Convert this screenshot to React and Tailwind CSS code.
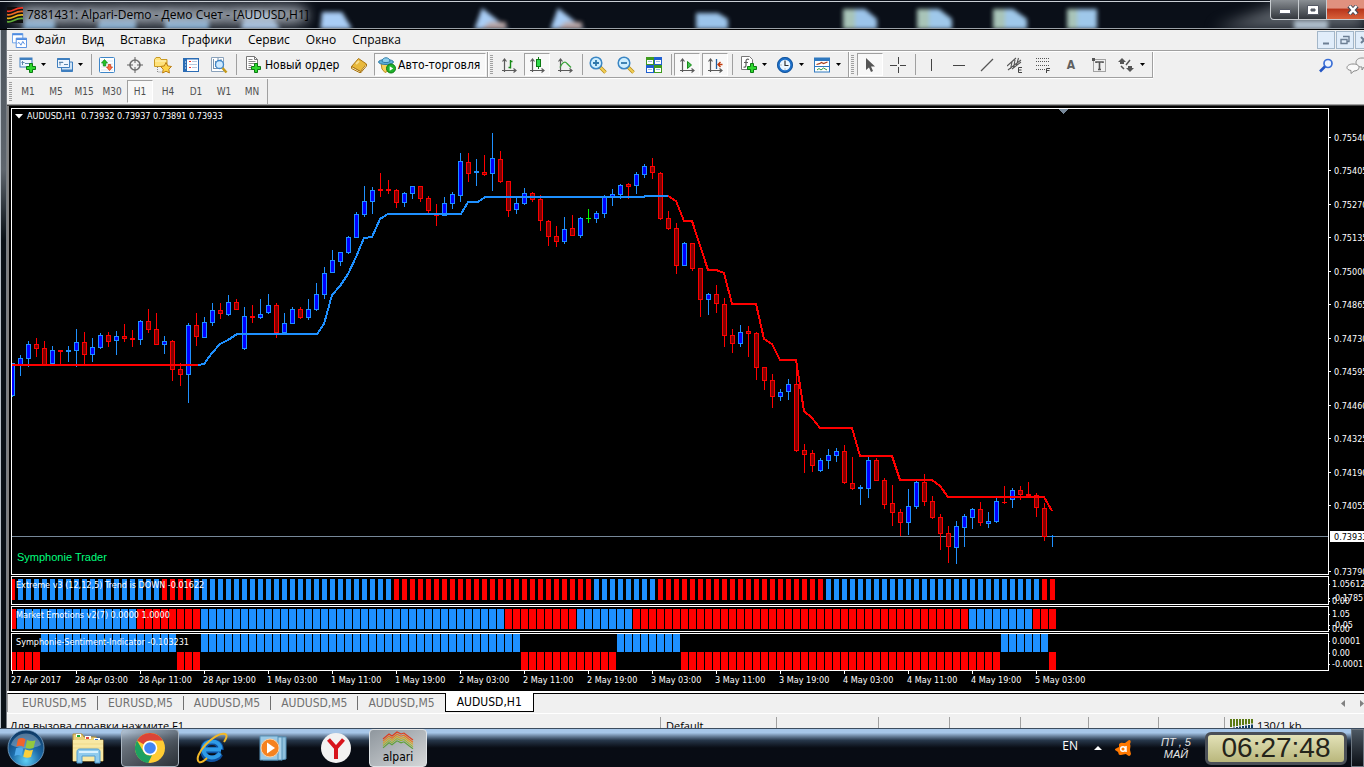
import React from 'react';
import clsx from 'clsx';

// kind, high, body top, body bottom, low
const candles = `
b 363 363 396 397|b 355 358 366 376|b 341 344 359 367|r 338 344 349 357|r 341 348 365 365|b 346 350 364 364|r 350 350 352 365|b 346 350 352 362
b 329 342 351 367|r 332 342 355 364|b 338 347 355 362|b 333 335 348 349|r 332 335 342 347|b 331 336 341 355|r 324 336 339 342|r 330 338 340 347
b 320 321 340 345|r 309 321 330 333|r 313 329 345 345|b 336 341 345 354|r 340 341 370 381|r 363 369 375 386|b 323 325 375 403|r 313 325 337 346
b 317 322 338 338|b 303 310 323 326|r 303 310 314 319|b 295 302 315 316|r 299 302 310 310|b 307 316 349 350|r 305 316 318 323|b 299 314 318 319
b 294 305 313 314|r 303 305 333 338|b 313 323 333 333|b 307 309 324 324|r 307 309 318 319|b 299 309 318 320|b 283 294 310 311|b 267 273 295 299
b 250 260 273 273|b 252 252 262 266|b 236 237 253 254|b 212 214 238 238|b 186 201 215 217|b 187 190 202 214|r 173 189 191 197|r 180 189 191 194
r 189 190 203 208|b 192 193 203 207|b 186 186 194 199|r 186 186 199 202|r 196 198 211 213|r 204 214 216 226|b 197 203 216 216|b 192 194 204 209
b 153 161 196 202|r 153 162 174 182|b 159 171 173 186|r 155 172 175 176|b 133 158 174 191|r 151 159 182 183|r 181 181 211 217|b 197 203 210 214
b 188 193 204 205|r 192 193 200 202|r 195 199 221 231|r 220 221 237 246|r 226 236 242 247|b 217 229 242 244|r 215 228 236 236|b 217 218 236 238
g 209 218 219 223|b 211 213 219 223|b 195 197 214 218|b 189 194 197 206|b 184 185 195 199|r 183 184 187 199|b 172 174 186 194|b 164 166 175 178
r 158 166 173 179|r 172 173 219 220|r 211 218 229 230|r 223 228 266 274|b 242 243 266 266|r 243 243 269 271|r 268 268 300 317|b 293 294 300 315
r 285 294 304 313|r 298 304 336 347|r 329 335 344 353|b 325 332 344 347|r 326 331 334 357|r 332 333 368 380|r 367 367 381 390|r 374 380 397 408
b 389 392 397 401|b 379 384 392 400|r 359 384 451 452|r 444 450 455 473|r 450 453 466 472|b 458 460 471 472|b 449 455 461 469|b 448 451 456 462
r 445 451 483 484|r 457 483 489 490|b 485 487 489 505|b 457 460 489 498|r 458 460 481 481|r 478 480 505 509|r 485 503 513 526|r 509 512 523 536
b 489 506 523 535|b 481 482 507 509|r 474 482 502 506|r 496 501 518 519|r 514 517 534 550|r 526 533 547 563|b 521 526 548 564|b 514 516 528 547
b 508 509 518 529|r 502 509 523 526|b 512 521 524 528|b 498 501 522 523|r 486 502 503 504|b 488 490 500 508|r 486 490 495 500|r 482 494 496 496
r 493 495 508 517|r 503 508 537 541|b 535 536 537 547`
  .trim()
  .split(/[|\n]/)
  .map((row) => {
    const [kind, ...values] = row.split(' ');
    return [kind, ...values.map(Number)];
  });

const candleColors = {
  b: ['#1e90ff', '#0000ff'],
  r: ['#ff0000', '#800000'],
  g: ['#00ff00', '#00ff00'],
};

const trendLines = [
  ['#ff0000', '12,365 198,365'],
  ['#1e90ff', '198,365 204,364 212,353 220,344 228,340 237,334 317,334 324,324 332,295 340,286 348,274 356,257 364,238 372,237 380,219 388,214 461,214 468,202 478,202 485,197 644,197 645,196 668,196'],
  ['#ff0000', '668,196 676,201 684,221 692,221 708,270 716,270 724,273 732,304 756,304 764,339 772,344 780,360 796,360 804,411 812,418 820,428 852,428 860,456 892,456 900,480 932,480 940,486 948,497 1044,497 1052,511'],
];

// last bar index of every colour run
const extremeRuns = [['r', 0], ['b', 18], ['r', 22], ['b', 47], ['r', 72], ['b', 80], ['r', 101], ['b', 128], ['r', 130]];
const emotionRuns = [['r', 0], ['b', 15], ['r', 23], ['b', 61], ['r', 70], ['b', 77], ['r', 119], ['b', 127], ['r', 130]];
const sentimentRuns = [['r', 3], ['b', 20], ['r', 23], ['b', 63], ['r', 75], ['b', 83], ['r', 123], ['b', 129], ['r', 130]];

const prices = [
  [137, '0.75540'], [170, '0.75405'], [204, '0.75270'], [237, '0.75135'], [271, '0.75000'],
  [304, '0.74865'], [338, '0.74730'], [371, '0.74595'], [405, '0.74460'], [438, '0.74325'],
  [472, '0.74190'], [505, '0.74055'], [571, '0.73790'],
];

const times = [
  '27 Apr 2017', '28 Apr 03:00', '28 Apr 11:00', '28 Apr 19:00', '1 May 03:00', '1 May 11:00',
  '1 May 19:00', '2 May 03:00', '2 May 11:00', '2 May 19:00', '3 May 03:00', '3 May 11:00',
  '3 May 19:00', '4 May 03:00', '4 May 11:00', '4 May 19:00', '5 May 03:00',
];

const tahoma = "font-['DejaVu_Sans_Condensed','DejaVu_Sans',sans-serif]";
const segoe = "font-['Open_Sans','Noto_Sans',sans-serif]";

const expandRuns = (runs) => {
  const out = [];
  runs.forEach(([kind, last]) => {
    while (out.length <= last) out.push(kind);
  });
  return out;
};

/* ---------- icons ---------- */

const Icon = ({ children, size = 16, box = 16 }) => (
  <svg width={size} height={size} viewBox={`0 0 ${box} ${box}`} fill="none" className="shrink-0" aria-hidden="true">
    {children}
  </svg>
);

const Plus = ({ x, y }) => (
  <path
    transform={`translate(${x} ${y})`}
    d="M3.5.5h3v3h3v3h-3v3h-3v-3h-3v-3h3z"
    fill="#2fd82f"
    stroke="#0b7a12"
  />
);

const NewChartIcon = () => (
  <Icon size={18} box={18}>
    <rect x="1" y="2" width="12" height="9" fill="#eef6ff" stroke="#3f7fbf" />
    <path d="M1 3h12" stroke="#3f7fbf" strokeWidth="2" />
    <path d="M3.500 5v4M2.500 6.500h3M6 7.500h5" stroke="#5c86ad" />
    <Plus x={7} y={7} />
  </Icon>
);

const ProfilesIcon = () => (
  <Icon size={18} box={18}>
    <path d="M5.500 6h11v9.500h-11z" fill="#cfe3f5" stroke="#3f7fbf" />
    <path d="M1.500 2.500h12v9h-12z" fill="#eef6ff" stroke="#3f7fbf" />
    <path d="M1.500 3h12" stroke="#3f7fbf" strokeWidth="2" />
    <path d="M4 5.500v4M3 6.500h4l-1-1M8 8.500h4" stroke="#5c86ad" />
    <path d="M5.500 14.500h11" stroke="#3f7fbf" strokeWidth="2" />
  </Icon>
);

const MarketWatchIcon = () => (
  <Icon>
    <rect x=".5" y=".5" width="15" height="15" rx="1" fill="#fff" stroke="#3f86c8" />
    <path d="M2 4h12M2 7h12M2 10h12M2 13h12" stroke="#dbe6f2" />
    <path d="M5.500 2.500 8.500 6H6.700v3H4.300V6H2.500z" fill="#25c225" stroke="#0a8a12" strokeWidth=".7" />
    <path d="M10.500 13.500 7.500 10h1.800V7.500h2.400V10h1.800z" fill="#ff7043" stroke="#c83208" strokeWidth=".7" />
  </Icon>
);

const CrosshairTargetIcon = () => (
  <Icon>
    <circle cx="8" cy="8" r="5" stroke="#707070" strokeWidth="1.600" />
    <path d="M8 0v6M8 10v6M0 8h6M10 8h6" stroke="#606060" />
  </Icon>
);

const NavigatorIcon = () => (
  <Icon size={18} box={18}>
    <path d="M.5 3.500 2 1.500h4l1 2h6v7H.5z" fill="#ffe27a" stroke="#c99a24" />
    <path d="M1 5h11" stroke="#fff4c0" />
    <path d="M3.500 11v5h5" stroke="#888" strokeDasharray="1 1" />
    <path d="m12 6.500 1.700 3.400 3.800.6-2.700 2.700.6 3.800-3.400-1.800L8.600 17l.6-3.800-2.700-2.700 3.800-.6z" fill="#ffd54a" stroke="#bd7f13" />
  </Icon>
);

const DataWindowIcon = () => (
  <Icon>
    <rect x=".5" y="1.500" width="15" height="13" fill="#fff" stroke="#2b6cb5" />
    <path d="M1 2h14" stroke="#2b6cb5" />
    <path d="M2.500 2v12" stroke="#2b6cb5" strokeWidth="3" />
    <path d="M6 4.500h2M6 10.500h2" stroke="#e33" />
    <path d="M9 4.500h5M6 7.500h8M9 10.500h5" stroke="#b6c9de" />
    <path d="M2 5h1M2 8h1M2 11h1" stroke="#fff" />
  </Icon>
);

const TesterIcon = () => (
  <Icon size={18} box={18}>
    <path d="M1.500 1.500h12v14h-12z" fill="#fff" stroke="#8aa2bb" />
    <path d="M3.500 3v10M5.500 5v6M3 12.500h9M8 2v3M11 3v3" stroke="#7893ae" />
    <circle cx="9.500" cy="8.500" r="4" fill="#cfeaff" stroke="#3f86c8" strokeWidth="1.300" />
    <path d="m12.500 12 4 4.500" stroke="#c49a1a" strokeWidth="2.500" />
  </Icon>
);

const NewOrderIcon = () => (
  <Icon size={18} box={18}>
    <path d="M1.500.5h8l3 3v10h-11z" fill="#fff" stroke="#777" />
    <path d="M9.500.5v3h3" stroke="#777" />
    <path d="M3.500 3.500h4M3.500 5.500h7M3.500 7.500h7M3.500 9.500h3M3.500 11.500h3" stroke="#888" />
    <Plus x={6} y={7} />
  </Icon>
);

const BookIcon = () => (
  <Icon>
    <path d="m.5 9.500 7-8 8 5.500-6 7.500z" fill="#e8b93c" stroke="#a87412" />
    <path d="M.5 9.500v2l9 4.500v-1.500zM9.500 16l6-7V7" fill="#fff3c4" stroke="#a87412" />
    <path d="m5 7 3-3" stroke="#f8df8e" strokeWidth="2" />
  </Icon>
);

const AutoTradeIcon = () => (
  <Icon size={18} box={18}>
    <path d="M3 7h10l-1 7-5 2.500L4 13z" fill="#f7d25a" stroke="#b98a1c" />
    <ellipse cx="8" cy="6" rx="7.500" ry="2.500" fill="#5fb0d8" stroke="#2f7ba6" />
    <path d="M4 5.500c0-5 8-5 8 0-2 1.500-6 1.500-8 0z" fill="#8fd0ee" stroke="#2f7ba6" />
    <circle cx="13" cy="12.500" r="4.500" fill="#1fb32c" stroke="#0b7a12" />
    <path d="m11.700 10.200 3.500 2.300-3.500 2.300z" fill="#fff" />
  </Icon>
);

const Axes = () => (
  <path d="M3.500 15V2M1.500 4.500l2-2.500 2 2.500M1 13.500h14M12.500 11.500l2.500 2-2.500 2" stroke="#5a5a5a" strokeWidth="1.200" />
);

const BarChartIcon = () => (
  <Icon>
    <Axes />
    <path d="M9.500 3v8.500M7.500 10.500h2M9.500 4.500h2" stroke="#178a17" strokeWidth="1.400" />
  </Icon>
);

const CandleChartIcon = () => (
  <Icon>
    <Axes />
    <path d="M9.500 0v12" stroke="#0b7a12" />
    <rect x="7.500" y="2.500" width="4" height="7" fill="#2fd84a" stroke="#0b7a12" />
  </Icon>
);

const LineChartIcon = () => (
  <Icon>
    <Axes />
    <path d="M3 10.500c2-5 5-7 7-4l4 4" stroke="#3aa33a" strokeWidth="1.300" />
  </Icon>
);

const MagnifierIcon = ({ plus }) => (
  <Icon size={18} box={18}>
    <path d="m11 11 5.500 5.500" stroke="#b88d18" strokeWidth="3.600" />
    <path d="m11 11 5.500 5.500" stroke="#f2cf58" strokeWidth="2" />
    <circle cx="7" cy="7" r="5.800" fill="#cdeeff" stroke="#3a86c4" strokeWidth="1.500" />
    <path d={plus ? 'M4 7h6M7 4v6' : 'M4 7h6'} stroke="#2f78ac" strokeWidth="1.800" />
  </Icon>
);

const TileIcon = () => (
  <Icon>
    <path d="M0 0h8v8H0zM8 8h8v8H8z" fill="#3f9b1e" />
    <path d="M8 0h8v8H8zM0 8h8v8H0z" fill="#1f5fd0" />
    <path d="M1 3h6v4H1zM9 3h6v4H9zM1 11h6v4H1zM9 11h6v4H9z" fill="#fff" />
    <path d="M2 4.500h4M10 4.500h4M2 12.500h4M10 12.500h4" stroke="#9fbfe0" />
  </Icon>
);

const AutoScrollIcon = () => (
  <Icon>
    <Axes />
    <path d="m8.500 4.500 4 3.500-4 3.500z" fill="#3fc34f" stroke="#178a17" />
  </Icon>
);

const ShiftIcon = () => (
  <Icon>
    <Axes />
    <path d="M9.500 2v10" stroke="#1f5fa0" strokeWidth="1.300" />
    <path d="M15.500 7.500h-4M13.500 5l-2.500 2.500 2.500 2.500" stroke="#c23a0a" strokeWidth="1.400" />
  </Icon>
);

const IndicatorsIcon = () => (
  <Icon size={18} box={18}>
    <path d="M1.500.5h8l3 3v10h-11z" fill="#fff" stroke="#777" />
    <path d="M9 3.500c-2-1-3 0-3 2v3.500c0 2-1 2.500-2.500 2M4 6.500h4" stroke="#5c5c5c" strokeWidth="1.200" />
    <Plus x={7} y={7} />
  </Icon>
);

const ClockIcon = () => (
  <Icon>
    <circle cx="8" cy="8" r="6.600" fill="#eaf6ff" stroke="#1d6fc8" strokeWidth="2.600" />
    <circle cx="8" cy="8" r="7.600" stroke="#0b4688" strokeWidth=".7" />
    <path d="M8 3.500V8.500h3.500" stroke="#333" strokeWidth="1.200" />
    <path d="M3.500 8h1M8 12.500v-1" stroke="#888" />
  </Icon>
);

const TemplateIcon = () => (
  <Icon>
    <rect x=".5" y="1" width="15" height="14" fill="#fff" stroke="#2f78bf" />
    <path d="M0 2.500h16" stroke="#2f78bf" strokeWidth="3" />
    <path d="M1 9.500h14" stroke="#2f78bf" />
    <path d="m2.500 7.500 3-.8 2-1.200 2 1 4-1.500" stroke="#a8401c" strokeWidth="1.200" />
    <path d="m3 13 2-1.500 2 1.500 2.500-2L13 13" stroke="#2f9a3a" />
  </Icon>
);

const CursorIcon = () => (
  <Icon>
    <path d="M4 1v12l3-2.500 2 4.500 2-1-2-4.500h4z" fill="#555" />
  </Icon>
);

const CrossIcon = () => (
  <Icon>
    <path d="M8.500 0v7M8.500 10v6M0 8.500h7M10 8.500h6" stroke="#444" />
  </Icon>
);

const VLineIcon = () => <Icon><path d="M8.500 2v12" stroke="#444" /></Icon>;
const HLineIcon = () => <Icon><path d="M2 8.500h12" stroke="#444" /></Icon>;
const TrendIcon = () => <Icon><path d="m2 14 12-12" stroke="#555" strokeWidth="1.200" /></Icon>;

const ChannelIcon = () => (
  <Icon>
    <path d="M0 9 9 1M1 13 14 3M5 12l9-7M3.500 12 5 5M6.500 11l1.500-8M9.500 8l2-7" stroke="#555" strokeWidth="1.100" />
    <path d="M15 10.500h-3.500v5H15M11.500 13h3" stroke="#444" />
  </Icon>
);

const FiboIcon = () => (
  <Icon>
    <path d="M1 1.500h14M1 4.500h14M1 8.500h14M1 12.500h9" stroke="#555" strokeDasharray="1 1" />
    <path d="M15 11.500h-3.500V16M11.500 13.500h3" stroke="#444" />
  </Icon>
);

const LabelIcon = () => (
  <Icon>
    <rect x="2.500" y="2.500" width="12" height="12" stroke="#555" strokeDasharray="1 1" />
    <path d="M1 1h3v3H1z" fill="#555" />
    <path d="M5 6V5h7v1M8.500 5v7.500M7 12.500h3" stroke="#555" strokeWidth="1.600" />
  </Icon>
);

const ShapesIcon = () => (
  <Icon>
    <path d="m4 1 4 4H6v2H2V5H0zM12 15l-4-4h2V9h4v2h2z" fill="#555" />
    <path d="m3 9 3 3M8 8l4-5" stroke="#555" strokeWidth="1.500" />
  </Icon>
);

const SearchIcon = () => (
  <Icon>
    <circle cx="10" cy="5.500" r="4" fill="#eef5ff" stroke="#3b6fd6" strokeWidth="1.700" />
    <path d="m7 8.500-5 5" stroke="#2456c4" strokeWidth="2.600" />
  </Icon>
);

const ChatIcon = () => (
  <Icon size={24} box={24}>
    <path d="M16 4c5 0 7 2 7 4.500s-2 4.500-5 4.500l-2 3v-3c-4 0-6-2-6-4.500S12 4 16 4z" fill="#f2f2f2" stroke="#8a8a8a" />
    <path d="M7 10c4 0 6 1.500 6 3.500s-2 3.500-5 3.500l-3 2.500v-3c-3-.5-4-1.500-4-3S3 10 7 10z" fill="#fafafa" stroke="#8a8a8a" />
  </Icon>
);

/* ---------- window chrome ---------- */

const TitleBar = () => (
  <header className={clsx('relative flex h-[30px] shrink-0 overflow-hidden border-b border-black bg-[#0a0f18]', segoe)}>
    {/* desktop shortcuts shining through the glass */}
    <svg className="absolute inset-0 h-full w-full blur-[2px]" aria-hidden="true">
      <path d="M482 8l28 22h-36zM558 8l28 22h-36z" fill="#a9cdf5" />
      <path d="M490 22h16v8h-26zM566 22h16v8h-26z" fill="#b9a7a8" />
      <path d="M245 12h25l12 20h-42zM322 12h20l12 20h-34z" fill="#a9cdf5" />
      <path d="M100 18h36v14h-40zM25 18h30v14H22zM165 18h44v14h-44z" fill="#7fb2de" />
      <path d="M696 13h22l10 6v13h-32zM843 9h22l12 10v13h-34z" fill="#9cc4ea" />
      <path d="M917 9h22l13 10v13h-35zM993 9h20l14 10v13h-34zM1067 9h30v23h-30z" fill="#9fc8ea" />
      <path d="M843 9h12v23h-12zM917 9h12v23h-12zM993 9h12v23h-12zM1067 9h10v23h-10z" fill="#a8c4b8" />
      <path d="M1294 20h34v12h-34z" fill="#c6dcee" />
    </svg>
    <svg className="absolute inset-0 h-full w-full blur-[7px]" aria-hidden="true">
      <path d="M1200 34 1290 0h300v34z" fill="#8e949b" opacity=".6" />
      <rect x="14" y="6" width="292" height="18" rx="9" fill="#a3abb5" opacity=".9" />
    </svg>
    <svg className="absolute inset-0 h-full w-full" shapeRendering="crispEdges" aria-hidden="true">
      <rect y="1" width="100%" height="1" fill="#c9ced4" />
      <rect x="7" y="28" width="100%" height="1" fill="#9aa0a6" />
    </svg>
    <div className="relative flex flex-1 items-center gap-1 pl-[7px]">
      <svg width="16" height="16" viewBox="0 0 16 16" aria-hidden="true">
        <path d="M0 0h16v16H0z" fill="#101010" />
        <path d="M0 4c5 2 8-4 16-3" stroke="#ee3524" strokeWidth="1.800" fill="none" />
        <path d="M0 7.500c5 2 8-4 16-3" stroke="#ee6a24" strokeWidth="1.800" fill="none" />
        <path d="M0 11c5 2 8-4 16-3" stroke="#e8b41b" strokeWidth="1.800" fill="none" />
        <path d="M0 14.500c5 2 8-4 16-3" stroke="#5fae3a" strokeWidth="1.800" fill="none" />
      </svg>
      <h1 className="text-[12px] leading-4 whitespace-nowrap text-black [text-shadow:0_0_8px_#cdd3da]">7881431: Alpari-Demo - Демо Счет - [AUDUSD,H1]</h1>
    </div>
    <div className="relative -mr-4 flex h-[20px] overflow-hidden rounded-b border border-t-0 border-[#c8ccd0] bg-linear-to-b from-[#8a8f94] to-[#34383e]">
      <button type="button" aria-label="Свернуть" className="flex w-7 items-end justify-center border-r border-[#c8ccd0] pb-[5px]">
        <svg width="12" height="5"><path d="M.5.5h11v4H.5z" fill="#fff" stroke="#555a66" /></svg>
      </button>
      <button type="button" aria-label="Развернуть" className="flex w-7 items-center justify-center border-r border-[#c8ccd0]">
        <svg width="12" height="10"><path d="M.5.5h11v9H.5zM4 4h4v2H4z" fill="#fff" fillRule="evenodd" stroke="#555a66" /></svg>
      </button>
      <button type="button" aria-label="Закрыть" className="flex w-[52px] items-center justify-center bg-linear-to-b from-[#e0917f] from-40% via-[#b9361c] via-50% to-[#d8603a]">
        <svg width="12" height="10"><path d="m2 1 8 8M10 1 2 9" stroke="#444a58" strokeWidth="4.500" /><path d="m2.500 1 7 8M9.500 1l-7 8" stroke="#fff" strokeWidth="2.500" /></svg>
      </button>
    </div>
  </header>
);

const menuItems = ['Файл', 'Вид', 'Вставка', 'Графики', 'Сервис', 'Окно', 'Справка'];

const MenuBar = () => (
  <nav className={clsx('flex h-[22px] shrink-0 items-center border-b border-white bg-[#f0f0f0] pl-[5px] shadow-[inset_0_-1px_0_#a0a0a0]', segoe)}>
    <Icon size={15}>
      <path d="M.5.500h11v10H.5z" fill="#fff" stroke="#6aa0e6" />
      <path d="M4.500 5.500h11v10h-11z" fill="#fff" stroke="#4f8be0" />
      <path d="M4.500 6.500h11M.5 1.500h11" stroke="#4f8be0" strokeWidth="2" />
      <path d="m6 11 1.500-1 2 3 2-4 2 3" stroke="#4f8be0" />
    </Icon>
    <div className="ml-2 flex flex-1 gap-4">
      {menuItems.map((item) => (
        <button type="button" key={item} className="pb-0.5 text-[12px] leading-[18px] text-black">{item}</button>
      ))}
    </div>
    <div className="-mr-[9px] flex gap-px pb-0.5 text-[#6d7f94]">
      {['M5 11.500h6', 'M6 4.500h6v5h-2M4 7.500h6v4H4z', 'm5 5 6 6M11 5l-6 6'].map((d, i) => (
        <button type="button" key={d} aria-label={['Свернуть окно', 'Восстановить окно', 'Закрыть окно'][i]} className="flex size-[18px] items-center justify-center border border-[#a3b6c8] bg-[#e1edfa]">
          <Icon><path d={d} stroke="currentColor" strokeWidth={i === 1 ? 1.4 : 2} /></Icon>
        </button>
      ))}
    </div>
  </nav>
);

const pressedLook = 'border border-t-[#a0a0a0] border-l-[#a0a0a0] border-r-white border-b-white bg-[#f8f8f8]';

const Grip = () => (
  <span className="mr-[3px] h-[19px] w-[3px] shrink-0 bg-[repeating-linear-gradient(to_bottom,#a0a0a0_0_1px,#f0f0f0_1px_2px)]" />
);

const Sep = () => <span className="mx-0.5 h-[21px] w-px shrink-0 bg-[#a0a0a0]" />;

const Tool = ({ label, pressed, children }) => (
  <button type="button" aria-label={label} className={clsx('mr-0.5 flex h-[23px] w-[26px] shrink-0 items-center justify-center', pressed && pressedLook)}>
    {children}
  </button>
);

const Caret = () => (
  <svg width="5" height="3" aria-hidden="true"><path d="M0 0h5L2.500 3z" fill="#000" /></svg>
);

const DropTool = ({ label, children }) => (
  <button type="button" aria-label={label} className="flex h-[23px] w-[37px] shrink-0 items-center justify-between pr-[6px] pl-1">
    {children}
    <Caret />
  </button>
);

const ToolSection = ({ children }) => (
  <div className="flex h-full shrink-0 items-center border-r border-[#a0a0a0] pr-px pl-0.5 shadow-[1px_0_0_#fff]">{children}</div>
);

const Toolbar = () => (
  <div className={clsx('flex h-[27px] shrink-0 items-center justify-between bg-[#f0f0f0] text-[12px] text-black', tahoma)}>
    <div className="flex h-[26px] self-start border-b border-[#a0a0a0] shadow-[0_1px_0_#fff]">
      <ToolSection>
        <Grip />
        <DropTool label="Новый график"><NewChartIcon /></DropTool>
        <DropTool label="Профили"><ProfilesIcon /></DropTool>
        <Sep />
        <Tool label="Обзор рынка"><MarketWatchIcon /></Tool>
        <Tool label="Прицел"><CrosshairTargetIcon /></Tool>
        <Tool label="Навигатор"><NavigatorIcon /></Tool>
        <Tool label="Окно данных"><DataWindowIcon /></Tool>
        <Tool label="Тестер стратегий"><TesterIcon /></Tool>
        <Sep />
        <button type="button" className="flex w-[107px] shrink-0 items-center gap-0.5 pl-[6px] whitespace-nowrap">
          <NewOrderIcon />
          Новый ордер
        </button>
        <Tool label="MetaEditor"><BookIcon /></Tool>
        <button type="button" className={clsx('flex h-[23px] w-[112px] shrink-0 items-center gap-0.5 pl-[3px] whitespace-nowrap', pressedLook)}>
          <AutoTradeIcon />
          Авто-торговля
        </button>
      </ToolSection>
      <ToolSection>
        <Grip />
        <Tool label="Бары"><BarChartIcon /></Tool>
        <Tool label="Свечи" pressed><CandleChartIcon /></Tool>
        <Tool label="Линия"><LineChartIcon /></Tool>
        <Sep />
        <Tool label="Увеличить"><MagnifierIcon plus /></Tool>
        <Tool label="Уменьшить"><MagnifierIcon /></Tool>
        <Tool label="Окна мозаикой"><TileIcon /></Tool>
        <Sep />
        <Tool label="Автопрокрутка" pressed><AutoScrollIcon /></Tool>
        <Tool label="Сдвиг графика" pressed><ShiftIcon /></Tool>
        <Sep />
        <span className="w-px" />
        <DropTool label="Индикаторы"><IndicatorsIcon /></DropTool>
        <DropTool label="Периоды"><ClockIcon /></DropTool>
        <DropTool label="Шаблоны"><TemplateIcon /></DropTool>
      </ToolSection>
      <ToolSection>
        <Grip />
        <Tool label="Курсор" pressed><CursorIcon /></Tool>
        <Tool label="Перекрестие"><CrossIcon /></Tool>
        <Sep />
        <Tool label="Вертикальная линия"><VLineIcon /></Tool>
        <Tool label="Горизонтальная линия"><HLineIcon /></Tool>
        <Tool label="Трендовая линия"><TrendIcon /></Tool>
        <Tool label="Равноудаленный канал"><ChannelIcon /></Tool>
        <Tool label="Фибоначчи"><FiboIcon /></Tool>
        <Tool label="Текст"><span className="text-[12px] font-bold text-[#606060]">A</span></Tool>
        <Tool label="Метка"><LabelIcon /></Tool>
        <DropTool label="Фигуры"><ShapesIcon /></DropTool>
      </ToolSection>
    </div>
    <div className="-mr-[6px] flex items-center gap-3">
      <button type="button" aria-label="Поиск"><SearchIcon /></button>
      <button type="button" aria-label="Чат"><ChatIcon /></button>
    </div>
  </div>
);

const frames = ['M1', 'M5', 'M15', 'M30', 'H1', 'H4', 'D1', 'W1', 'MN'];

const TimeframeBar = () => (
  <div className={clsx('flex h-[27px] shrink-0 border-b border-[#404040] bg-[#f0f0f0] text-[10px] text-[#505050] shadow-[inset_0_-1px_0_#a0a0a0]', tahoma)}>
    <div className="flex items-center border-r border-[#a0a0a0] pb-px pl-0.5">
      <Grip />
      {frames.map((frame) => (
        <button type="button" key={frame} className={clsx('mr-0.5 flex h-[23px] w-[26px] items-center justify-center', frame === 'H1' && pressedLook)}>
          {frame}
        </button>
      ))}
    </div>
  </div>
);

/* ---------- chart ---------- */

const PriceChart = () => (
  <svg className="block h-full w-full" shapeRendering="crispEdges" role="img" aria-label="AUDUSD H1">
    <g transform="translate(-12 -109)">
      <rect x="12" y="536" width="100%" height="1" fill="#778899" />
      {candles.map(([kind, high, top, bottom, low], i) => {
        const x = 12 + i * 8;
        const [edge, body] = candleColors[kind];
        return (
          <g key={i}>
            <rect x={x} y={high} width="1" height={low - high} fill={edge} />
            <rect x={x - 2} y={top} width="5" height={bottom - top} fill={edge} />
            {bottom - top > 2 && <rect x={x - 1} y={top + 1} width="3" height={bottom - top - 2} fill={body} />}
          </g>
        );
      })}
      {trendLines.map(([color, points]) => (
        <polyline key={points} points={points} fill="none" stroke={color} strokeWidth="2" />
      ))}
      <path d="M1059 109h9l-4.500 5z" fill="#778899" />
    </g>
  </svg>
);

const RunBars = ({ runs, half, top, height, lowerTop }) => (
  <svg className="absolute inset-0 h-full w-full" shapeRendering="crispEdges" aria-hidden="true">
    {expandRuns(runs).map((kind, i) => (
      <rect
        key={i}
        x={i * 8 - half}
        y={kind === 'r' && lowerTop !== undefined ? lowerTop : top}
        width={half * 2 + 1}
        height={height}
        fill={kind === 'r' ? '#ff0000' : '#1e90ff'}
      />
    ))}
  </svg>
);

const PriceAxis = () => (
  <svg className="h-full w-[35px] shrink-0" aria-hidden="true">
    <g transform="translate(0 -108)">
      {prices.map(([y, price]) => (
        <g key={price}>
          <rect x="0" y={y} width="2" height="1" fill="#fff" />
          <text x="5" y={y + 4} fill="#fff">{price}</text>
        </g>
      ))}
      <rect x="1" y="531" width="40" height="11" fill="#fff" />
      <text x="5" y="540" fill="#000">0.73933</text>
    </g>
  </svg>
);

const SideAxis = ({ labels }) => (
  <svg className="h-full w-[35px] shrink-0" aria-hidden="true">
    {labels.map(([y, text]) => (
      <g key={text}>
        <rect x="0" y={y - 3} width="1" height="1" fill="#fff" />
        <text x="3" y={y} fill="#fff">{text}</text>
      </g>
    ))}
  </svg>
);

const IndicatorPanel = ({ title, className, bars, labels }) => (
  <section className={clsx('mt-px flex shrink-0', className)}>
    <div className="relative min-w-0 flex-1 overflow-hidden border border-white">
      {bars}
      <p className="relative pt-px pl-1 whitespace-nowrap">{title}</p>
    </div>
    <SideAxis labels={labels} />
  </section>
);

const ChartWindow = () => (
  <main className={clsx('flex min-h-0 flex-1 flex-col overflow-hidden border-l-2 border-[#808080] bg-black pt-0.5 pl-0.5 text-[9px] leading-[15px] text-white', tahoma)}>
    <section className="flex min-h-0 flex-1">
      <div className="relative min-w-0 flex-1 overflow-hidden border border-white">
        <PriceChart />
        <p className="absolute top-0 left-[3px] flex items-center gap-1 whitespace-pre">
          <svg width="8" height="5" aria-hidden="true"><path d="M0 0h8L4 4.500z" fill="#fff" /></svg>
          {'AUDUSD,H1  0.73932 0.73937 0.73891 0.73933'}
        </p>
        <p className="absolute bottom-[9px] left-[5px] font-['Liberation_Sans',Arial,sans-serif] text-[11px] leading-4 text-[#00ff7f]">Symphonie Trader</p>
      </div>
      <PriceAxis />
    </section>
    <IndicatorPanel
      title="Extreme v3 (12,12,5) Trend is DOWN -0.01622"
      className="h-[29px]"
      bars={<RunBars runs={extremeRuns} half={2} top={2} height={21} />}
      labels={[[11, '1.05612'], [25, '-0.17857'], [28, '0.00']]}
    />
    <IndicatorPanel
      title="Market Emotions v2(7) 0.0000 1.0000"
      className="h-[26px]"
      bars={<RunBars runs={emotionRuns} half={3} top={2} height={20} />}
      labels={[[11, '1.05'], [22, '-0.05'], [26, '0.00']]}
    />
    <IndicatorPanel
      title="Symphonie-Sentiment-Indicator -0.103231"
      className="h-[38px]"
      bars={<RunBars runs={sentimentRuns} half={3} top={0} height={18} lowerTop={18} />}
      labels={[[11, '0.0001'], [23, '0.00'], [34, '-0.0001']]}
    />
    <ol className="flex h-5 shrink-0 pl-px">
      {times.map((time) => (
        <li key={time} className="w-16 shrink-0 whitespace-nowrap">
          <span className="block h-[3px] w-px bg-white" />
          <span className="-ml-px block leading-3">{time}</span>
        </li>
      ))}
    </ol>
  </main>
);

const tabs = ['EURUSD,M5', 'EURUSD,M5', 'AUDUSD,M5', 'AUDUSD,M5', 'AUDUSD,M5'];

const ChartTabs = () => (
  <div className={clsx('flex h-[23px] shrink-0 border-t-2 border-b border-white bg-[#f0f0f0] pb-px text-[12px] text-[#707070]', tahoma)}>
    <div className="flex items-center border-t border-l border-t-black border-l-[#a0a0a0] pl-1">
      {tabs.map((tab, i) => (
        <button type="button" key={i} className={clsx('h-3.5 px-[10px] leading-[14px]', i < 4 && 'border-r border-[#707070]')}>{tab}</button>
      ))}
    </div>
    <button type="button" className="border border-t-0 border-black bg-white px-[11px] leading-4 text-black">AUDUSD,H1</button>
    <div className="flex flex-1 items-center justify-end gap-[15px] border-t border-black">
      <button type="button" aria-label="Назад"><svg width="4" height="7"><path d="M4 0v7L0 3.500z" fill="#808080" /></svg></button>
      <button type="button" aria-label="Вперед"><svg width="4" height="7"><path d="M0 0v7l4-3.500z" fill="#808080" /></svg></button>
    </div>
  </div>
);

const cell = 'mt-[3px] h-4 shrink-0 border-l border-[#a0a0a0]';

const StatusBar = () => (
  <footer className={clsx('flex h-[14px] shrink-0 overflow-hidden bg-[#f0f0f0] text-[11px] leading-[18px] whitespace-nowrap text-black', segoe)}>
    <p className="mt-[3px] min-w-0 flex-1 pl-[3px]">Для вызова справки нажмите F1</p>
    <p className={clsx(cell, 'w-[116px] pl-[5px]')}>Default</p>
    <span className={clsx(cell, 'w-[102px]')} />
    <span className={clsx(cell, 'w-[71px]')} />
    <span className={clsx(cell, 'w-[71px]')} />
    <span className={clsx(cell, 'w-[68px]')} />
    <span className={clsx(cell, 'w-[70px]')} />
    <span className={clsx(cell, 'w-[66px]')} />
    <p className={clsx(cell, 'flex w-[140px] gap-1 pl-[5px]')}>
      <svg width="23" height="14" className="mt-0.5" aria-hidden="true">
        {[0, 1, 2, 3, 4, 5, 6, 7].map((n) => (
          <g key={n}>
            <rect x={n * 3} y="0" width="2" height={8 - n / 2} fill="#5b7a12" />
            <rect x={n * 3} y={9 - n / 2} width="2" height="8" fill="#123f66" />
          </g>
        ))}
      </svg>
      130/1 kb
    </p>
  </footer>
);

/* ---------- taskbar ---------- */

const StartOrb = () => (
  <svg width="38" height="38" viewBox="0 0 38 38" aria-hidden="true">
    <defs>
      <radialGradient id="orb" cx=".5" cy=".85" r=".9">
        <stop offset="0" stopColor="#5fd0f5" />
        <stop offset=".45" stopColor="#1c6aa8" />
        <stop offset="1" stopColor="#0b2f57" />
      </radialGradient>
    </defs>
    <circle cx="19" cy="19" r="18" fill="url(#orb)" stroke="#8ab4d6" strokeOpacity=".7" />
    <path d="M4 16a15.500 15.500 0 0 1 30 0c-8 4-20 5-30 0z" fill="#fff" opacity=".28" />
    <path d="M11 10c3-1.500 5-1 7.500.3L16.800 18c-2.500-1.500-5-1.500-7.500-.3z" fill="#f0642c" />
    <path d="M20 11c3 1.500 5 1.400 8.500.2L26.500 19c-3 1.200-5.500 1-8-.3z" fill="#93c83e" />
    <path d="M9 19.300c2.500-1.200 5-1.200 7.300.2L14.500 27c-2.500-1.300-4.500-1.300-7 0z" fill="#4fa9ea" />
    <path d="M18 20.300c2.700 1.300 5 1.500 8 .4L24 28c-2.500 1.200-5.300 1-7.800-.3z" fill="#fbcf3a" />
  </svg>
);

const ExplorerIcon = () => (
  <svg width="34" height="32" viewBox="0 0 34 32" aria-hidden="true">
    <path d="M2 2h9l2 3h12l1 3h6v21H2z" fill="#e9cf78" stroke="#b8923a" />
    <path d="M5 2h5v3H5zM14 4h6v3h-6zM23 6h6v3h-6z" fill="#fff" />
    <path d="M6 3h3v2H6z" fill="#22a83a" />
    <path d="M15 5h3v2h-3z" fill="#e2483c" />
    <path d="M24 7h3v2h-3z" fill="#2f6fd0" />
    <path d="M2 8h30v21H2z" fill="#f8e8a4" />
    <path d="M2 12h30M2 16h30" stroke="#eed98a" />
    <path d="M6 31V20c0-2 1-3 3-3h17c2 0 3 1 3 3v11h-5v-7H11v7z" fill="#8fcbee" stroke="#4f9bd0" />
    <path d="M8 20h19" stroke="#d8f1ff" strokeWidth="2" />
  </svg>
);

const ChromeIcon = () => (
  <svg width="30" height="30" viewBox="0 0 30 30" aria-hidden="true">
    <circle cx="15" cy="15" r="15" fill="#fc3" />
    <path d="M15 0a15 15 0 0 1 13 7.500H15a7.500 7.500 0 0 0-6.500 3.800L2 7.500A15 15 0 0 1 15 0z" fill="#db4437" />
    <path d="m2 7.500 6.500 11.200A7.500 7.500 0 0 0 17 22.200L13.200 30A15 15 0 0 1 2 7.500z" fill="#1da160" />
    <circle cx="15" cy="15" r="7.300" fill="#fff" />
    <circle cx="15" cy="15" r="5.800" fill="#4285f4" />
  </svg>
);

const ExplorerEIcon = () => (
  <svg width="34" height="32" viewBox="0 0 34 32" fill="none" aria-hidden="true">
    <path d="M8 18h18M25.500 18c0-11-17-11-17 0s13 11 16.500 4" stroke="#0d4f9e" strokeWidth="6.500" />
    <path d="M8 17.500h18M25.500 17c0-10-17-10-17 0s13 11 16.500 4" stroke="#2f9be6" strokeWidth="4" />
    <path d="M4 30C-3 24 20-1 30 2c3 1 1 5-1 8" stroke="#f2b828" strokeWidth="2" />
    <path d="M4 30c2 1 5-1 8-4" stroke="#f2b828" strokeWidth="2" />
  </svg>
);

const MediaIcon = () => (
  <svg width="28" height="28" viewBox="0 0 28 28" aria-hidden="true">
    <path d="M6 3h21v22l-5 1z" fill="#8fc0dd" stroke="#5792b8" />
    <path d="M4 3h19v23H4z" fill="#a9d2ea" stroke="#5792b8" />
    <path d="M1 2h18v24H1z" fill="#9ac9e5" stroke="#5792b8" />
    <circle cx="11" cy="14" r="9" fill="#f58220" stroke="#fbd0a4" />
    <path d="m8 8.500 8 5.500-8 5.500z" fill="#fff" />
  </svg>
);

const YandexIcon = () => (
  <svg width="30" height="30" viewBox="0 0 30 30" aria-hidden="true">
    <circle cx="15" cy="15" r="15" fill="#f2f2f2" />
    <path d="m7.500 6.500 7.500 8.500 7.500-8.500M15 14v12" stroke="#d8141c" strokeWidth="4" fill="none" />
  </svg>
);

const AlpariIcon = () => (
  <svg width="32" height="18" viewBox="0 0 32 18" fill="none" aria-hidden="true">
    {['#e03a1c', '#ea761c', '#d8a818', '#9eb52a', '#5fa03a'].map((color, i) => (
      <path key={color} transform={`translate(0 ${i * 2.2})`} d="m1 8 6-5 3 2 5-4 4 2 3-1 5 4 4 3" stroke={color} strokeWidth="1.100" />
    ))}
  </svg>
);

const TaskButton = ({ label, className, children }) => (
  <button type="button" aria-label={label} className={clsx('flex h-[38px] shrink-0 items-center justify-center', className)}>{children}</button>
);

const Taskbar = () => (
  <div className={clsx('flex h-[39px] shrink-0 items-center border-t border-[#3c4c5e] bg-linear-to-b from-[#a6c6e8] from-10% via-[#27374a] via-30% to-[#080c14] to-50% text-white', segoe)}>
    <TaskButton label="Пуск" className="w-[52px]"><StartOrb /></TaskButton>
    <TaskButton label="Проводник" className="w-[69px] pr-px pl-[3px]"><ExplorerIcon /></TaskButton>
    <TaskButton label="Chrome" className="w-[58px] rounded-sm border border-[#a9b4bf] bg-linear-to-br from-[#b4c0cc]/70 to-[#2c3239]"><ChromeIcon /></TaskButton>
    <TaskButton label="Internet Explorer" className="w-[66px]"><ExplorerEIcon /></TaskButton>
    <TaskButton label="Проигрыватель" className="w-[56px]"><MediaIcon /></TaskButton>
    <TaskButton label="Яндекс" className="w-[68px] pl-0.5"><YandexIcon /></TaskButton>
    <TaskButton label="Alpari" className="w-[58px] flex-col rounded-sm border border-[#dfe3e6] bg-linear-to-br from-[#8f979e] to-[#d5d7d8]">
      <AlpariIcon />
      <span className={clsx('text-[12px] leading-4 text-black', tahoma)}>alpari</span>
    </TaskButton>
    <div className="ml-auto flex h-full items-center">
      <span className="mr-[16px] pb-1 text-[12px] leading-4">EN</span>
      <svg width="8" height="4" className="mr-[13px]" aria-hidden="true"><path d="M0 4h8L4 0z" fill="#fff" /></svg>
      <svg width="17" height="17" viewBox="0 0 17 17" className="mr-7" aria-hidden="true">
        <path d="M4 4c2-2 4-1 6-1l4-3c2 0 2 2 1 4 1 2 0 4 0 6l1 4c-1 3-3 2-5 0l-5 1c-3 0-2-1-3-3L0 10c0-2 3-2 4-3z" fill="#ff7800" />
        <circle cx="8" cy="9" r="2.300" fill="none" stroke="#fff" strokeWidth="1.500" />
        <path d="M11 6v6" stroke="#fff" strokeWidth="1.500" />
      </svg>
      <p className="mr-[13px] w-8 text-center font-['Liberation_Sans',Arial,sans-serif] text-[11px] leading-3 whitespace-nowrap text-[#e4e4e4] italic">
        ПТ , 5<br />МАЙ
      </p>
      <time className="mr-1 flex h-[33px] w-[142px] items-center justify-center rounded-md border-[3px] border-[#4a4f57] bg-linear-to-b from-[#e3e2b8] to-[#b9b77c] font-['Liberation_Sans',Arial,sans-serif] text-[28px] leading-7 text-[#24241a]">
        06:27:48
      </time>
      <button type="button" aria-label="Показать рабочий стол" className="h-[38px] w-[13px] border border-[#6c7680] bg-linear-to-b from-[#4d5863] to-[#0c1016]" />
    </div>
  </div>
);

const App = () => (
  <div className="flex h-screen flex-col overflow-hidden bg-[#0a0f18]">
    <TitleBar />
    <div className="flex min-h-0 flex-1">
      <div className="w-[7px] shrink-0 border-r border-l border-r-[#777d84] border-l-[#b8c0c8] bg-linear-to-b from-[#4c545c] via-[#5f666e] via-20% to-[#0b1218] to-30%" />
      <div className="flex min-w-0 flex-1 flex-col">
        <MenuBar />
        <Toolbar />
        <TimeframeBar />
        <ChartWindow />
        <ChartTabs />
        <StatusBar />
      </div>
    </div>
    <Taskbar />
  </div>
);

export default App;
